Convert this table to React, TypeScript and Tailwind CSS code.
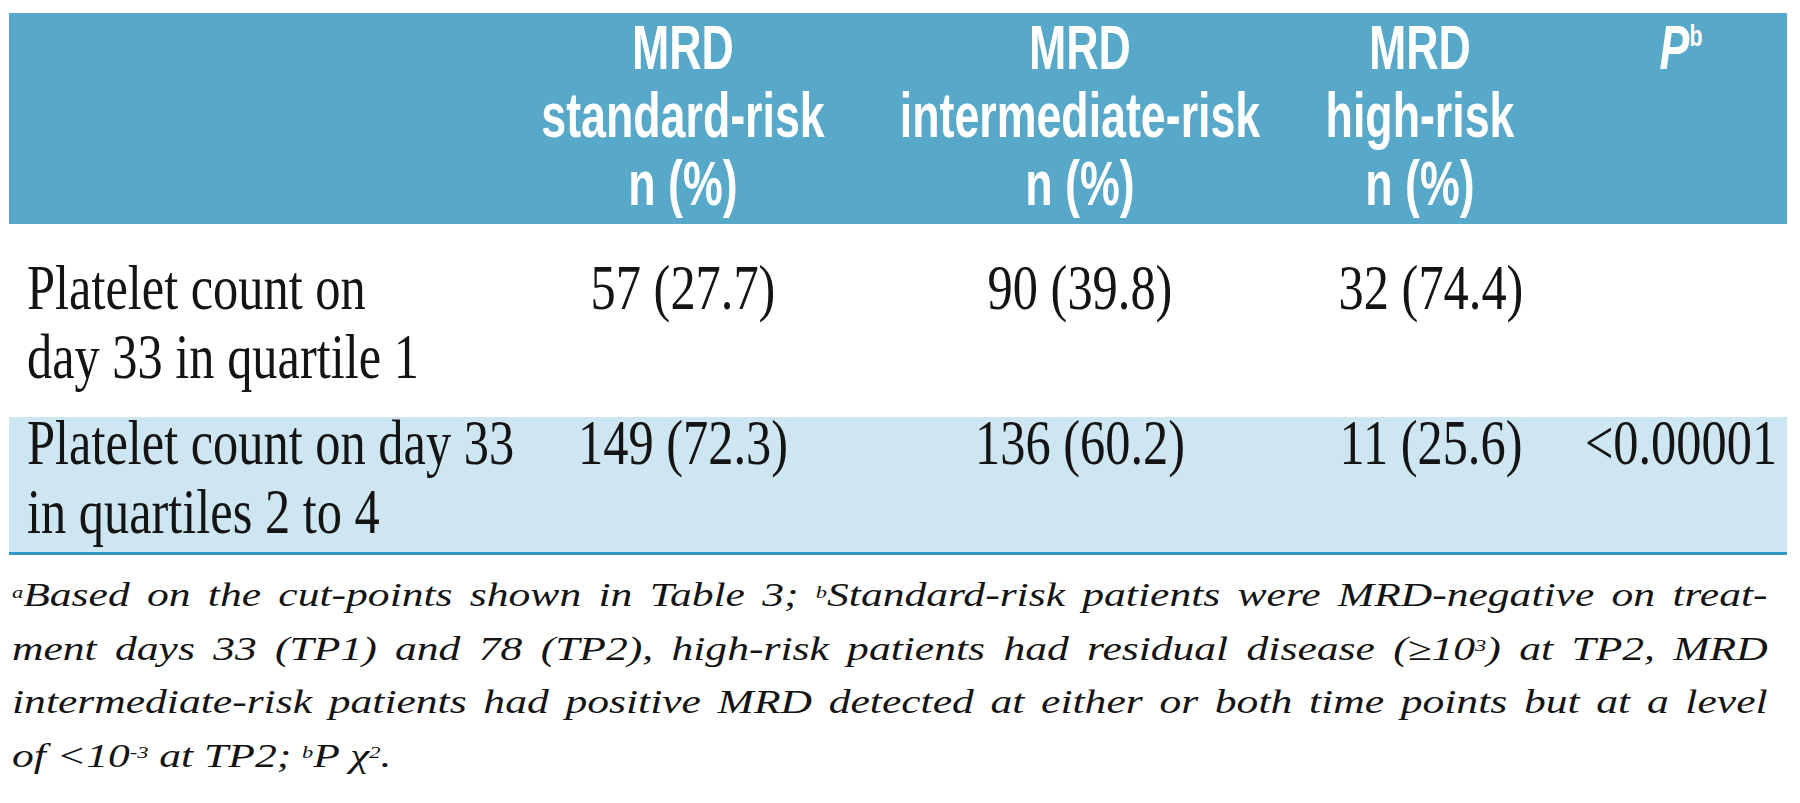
import React from 'react';

// shared column template for header and body rows
const cols = 'grid grid-cols-[531px_286px_508px_194px_259px]';
const serif = "font-['Liberation_Serif','Times_New_Roman',serif] text-[63px] leading-[69px] text-[#141414]";
const justified = 'text-justify [text-align-last:justify]';

const HeadLine: React.FC<{ children: React.ReactNode }> = ({ children }) => (
  <div className="flex justify-center whitespace-nowrap scale-x-[0.71]">
    <span>{children}</span>
  </div>
);

const Cell: React.FC<{ children: React.ReactNode; align?: 'left' | 'center' }> = ({ children, align = 'center' }) =>
  align === 'left' ? (
    <div className="whitespace-nowrap origin-left scale-x-[0.8]">{children}</div>
  ) : (
    <div className="flex justify-center whitespace-nowrap scale-x-[0.8]">
      <span>{children}</span>
    </div>
  );

const rows = [
  {
    label: ['Platelet count on', 'day 33 in quartile 1'],
    values: ['57 (27.7)', '90 (39.8)', '32 (74.4)', ''],
  },
  {
    label: ['Platelet count on day 33', 'in quartiles 2 to 4'],
    values: ['149 (72.3)', '136 (60.2)', '11 (25.6)', '<0.00001'],
  },
];

export default function App() {
  return (
    <div className="min-h-screen bg-white pt-[13px]">
      <div className="ml-[9px] w-[1778px]">
        {/* Header band */}
        <div
          className={`${cols} h-[211px] bg-[#57a8c9] text-white font-bold text-[63px] leading-[68px] font-['Liberation_Sans',Arial,sans-serif]`}
        >
          <div />
          <div>
            <HeadLine>MRD</HeadLine>
            <HeadLine>standard-risk</HeadLine>
            <HeadLine>n (%)</HeadLine>
          </div>
          <div>
            <HeadLine>MRD</HeadLine>
            <HeadLine>intermediate-risk</HeadLine>
            <HeadLine>n (%)</HeadLine>
          </div>
          <div className="pr-[22px]">
            <HeadLine>MRD</HeadLine>
            <HeadLine>high-risk</HeadLine>
            <HeadLine>n (%)</HeadLine>
          </div>
          <div className="pl-[47px]">
            <HeadLine>
              <span className="italic">P</span>
              <sup className="text-[30px] -top-[23px]">b</sup>
            </HeadLine>
          </div>
        </div>

        {/* Row 1 */}
        <div className={`${cols} h-[193px] pt-[30px] ${serif}`}>
          <div className="pl-[18px]">
            {rows[0].label.map((l) => (
              <Cell key={l} align="left">
                {l}
              </Cell>
            ))}
          </div>
          {rows[0].values.map((v, i) => (
            <div key={i} className={i === 3 ? 'pl-[47px]' : ''}>
              <Cell>{v}</Cell>
            </div>
          ))}
        </div>

        {/* Row 2 (shaded) */}
        <div className={`${cols} h-[138px] bg-[#cee6f2] border-b-[3px] border-[#2f98c5] ${serif}`}>
          <div className="pl-[18px] -mt-[8px]">
            {rows[1].label.map((l) => (
              <Cell key={l} align="left">
                {l}
              </Cell>
            ))}
          </div>
          {rows[1].values.map((v, i) => (
            <div key={i} className={i === 3 ? 'pl-[47px] -mt-[8px]' : '-mt-[8px]'}>
              <Cell>{v}</Cell>
            </div>
          ))}
        </div>
      </div>

      {/* Footnote */}
      <div className="ml-[12px] mt-[14px] w-[1330px] origin-left scale-x-[1.32] font-['Liberation_Serif','Times_New_Roman',serif] italic text-[33px] leading-[53.5px] text-[#141414]">
        <div className={justified}>
          <sup className="text-[17px]">a</sup>Based on the cut-points shown in Table 3; <sup className="text-[17px]">b</sup>Standard-risk patients were MRD-negative on treat-
        </div>
        <div className={justified}>
          ment days 33 (TP1) and 78 (TP2), high-risk patients had residual disease (≥10<sup className="text-[17px]">3</sup>) at TP2, MRD
        </div>
        <div className={justified}>
          intermediate-risk patients had positive MRD detected at either or both time points but at a level
        </div>
        <div>
          of &lt;10<sup className="text-[17px]">-3</sup> at TP2; <sup className="text-[17px]">b</sup>P χ<sup className="text-[17px]">2</sup>.
        </div>
      </div>
    </div>
  );
}
